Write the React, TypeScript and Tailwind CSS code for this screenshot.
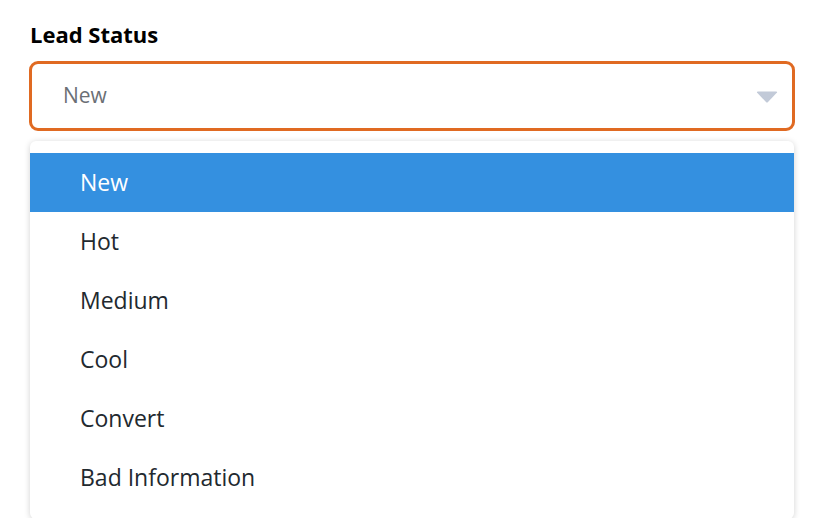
import React from 'react';

const options = ['New', 'Hot', 'Medium', 'Cool', 'Convert', 'Bad Information'];

const App: React.FC = () => {
  const selected = 'New';

  return (
    <div className="h-[518px] w-[828px] overflow-hidden bg-white pl-[29px] pr-[33px] pt-[19px] font-['Open_Sans',sans-serif]">
      <label className="ml-[1px] block text-[22px] font-bold leading-[30px] text-black">Lead Status</label>

      <div className="mt-[12px] flex h-[70px] items-center justify-between rounded-[9px] border-[3px] border-[#e06a22] bg-white pl-[31px] pr-[14px]">
        <span className="text-[21px] text-[#6b6f75]">{selected}</span>
        <svg width="22" height="12" viewBox="0 0 22 12" className="mt-[1px]">
          <path d="M1 1.5 Q0.5 0.5 2 0.5 L20 0.5 Q21.5 0.5 21 1.5 L12 11 Q11 12 10 11 Z" fill="#c2cad8" />
        </svg>
      </div>

      <div className="mt-[10px] ml-[1px] mr-[1px] rounded-[6px] bg-white py-[12px] shadow-[0_1px_6px_rgba(0,0,0,0.18)]">
        {options.map((o) => (
          <div
            key={o}
            className={`flex h-[59px] items-center pl-[50px] text-[23px] ${
              o === selected ? 'bg-[#3490e0] text-white' : 'text-[#22292f]'
            }`}
          >
            {o}
          </div>
        ))}
      </div>
    </div>
  );
};

export default App;
